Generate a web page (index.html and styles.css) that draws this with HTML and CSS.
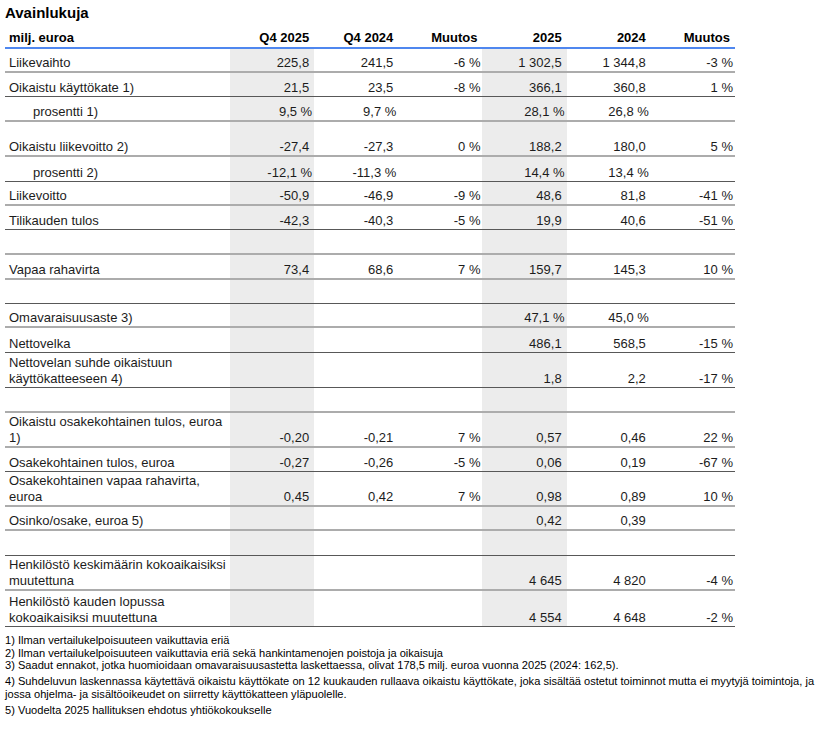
FILE: index.html
```html
<!DOCTYPE html>
<html lang="fi">
<head>
<meta charset="utf-8">
<title>Avainlukuja</title>
<link rel="stylesheet" href="styles.css">
</head>
<body>
<div class="page">
  <h1 class="title">Avainlukuja</h1>
  <table class="kpi">
    <colgroup>
      <col class="c-label"><col class="c-num"><col class="c-num"><col class="c-num"><col class="c-num"><col class="c-num"><col class="c-num">
    </colgroup>
    <thead>
      <tr class="hdr">
        <th class="lbl">milj. euroa</th><th>Q4 2025</th><th>Q4 2024</th><th>Muutos</th><th>2025</th><th>2024</th><th>Muutos</th>
      </tr>
    </thead>
    <tbody>
      <tr class="r24 lt"><td class="lbl">Liikevaihto</td><td>225,8</td><td>241,5</td><td class="p">-6 %</td><td>1&nbsp;302,5</td><td>1&nbsp;344,8</td><td class="p">-3 %</td></tr>
      <tr class="r24 dk"><td class="lbl">Oikaistu käyttökate 1)</td><td>21,5</td><td>23,5</td><td class="p">-8 %</td><td>366,1</td><td>360,8</td><td class="p">1 %</td></tr>
      <tr class="r25 lt"><td class="lbl sub">prosentti 1)</td><td class="p">9,5 %</td><td class="p">9,7 %</td><td></td><td class="p">28,1 %</td><td class="p">26,8 %</td><td></td></tr>
      <tr class="r35 lt"><td class="lbl">Oikaistu liikevoitto 2)</td><td>-27,4</td><td>-27,3</td><td class="p">0 %</td><td>188,2</td><td>180,0</td><td class="p">5 %</td></tr>
      <tr class="r25 dk"><td class="lbl sub">prosentti 2)</td><td class="p">-12,1 %</td><td class="p">-11,3 %</td><td></td><td class="p">14,4 %</td><td class="p">13,4 %</td><td></td></tr>
      <tr class="r24 lt"><td class="lbl">Liikevoitto</td><td>-50,9</td><td>-46,9</td><td class="p">-9 %</td><td>48,6</td><td>81,8</td><td class="p">-41 %</td></tr>
      <tr class="r24 dk"><td class="lbl">Tilikauden tulos</td><td>-42,3</td><td>-40,3</td><td class="p">-5 %</td><td>19,9</td><td>40,6</td><td class="p">-51 %</td></tr>
      <tr class="r25 lt"><td class="lbl"></td><td></td><td></td><td></td><td></td><td></td><td></td></tr>
      <tr class="r25 lt"><td class="lbl">Vapaa rahavirta</td><td>73,4</td><td>68,6</td><td class="p">7 %</td><td>159,7</td><td>145,3</td><td class="p">10 %</td></tr>
      <tr class="r24 dk"><td class="lbl"></td><td></td><td></td><td></td><td></td><td></td><td></td></tr>
      <tr class="r24 lt"><td class="lbl">Omavaraisuusaste 3)</td><td></td><td></td><td></td><td class="p">47,1 %</td><td class="p">45,0 %</td><td></td></tr>
      <tr class="r25 dk"><td class="lbl">Nettovelka</td><td></td><td></td><td></td><td>486,1</td><td>568,5</td><td class="p">-15 %</td></tr>
      <tr class="r35 dk"><td class="lbl">Nettovelan suhde oikaistuun<br>käyttökatteeseen 4)</td><td></td><td></td><td></td><td>1,8</td><td>2,2</td><td class="p">-17 %</td></tr>
      <tr class="r25 lt"><td class="lbl"></td><td></td><td></td><td></td><td></td><td></td><td></td></tr>
      <tr class="r35 lt"><td class="lbl">Oikaistu osakekohtainen tulos, euroa<br>1)</td><td>-0,20</td><td>-0,21</td><td class="p">7 %</td><td>0,57</td><td>0,46</td><td class="p">22 %</td></tr>
      <tr class="r24 dk"><td class="lbl">Osakekohtainen tulos, euroa</td><td>-0,27</td><td>-0,26</td><td class="p">-5 %</td><td>0,06</td><td>0,19</td><td class="p">-67 %</td></tr>
      <tr class="r35 lt"><td class="lbl">Osakekohtainen vapaa rahavirta,<br>euroa</td><td>0,45</td><td>0,42</td><td class="p">7 %</td><td>0,98</td><td>0,89</td><td class="p">10 %</td></tr>
      <tr class="r24 lt"><td class="lbl">Osinko/osake, euroa 5)</td><td></td><td></td><td></td><td>0,42</td><td>0,39</td><td></td></tr>
      <tr class="r25 dk"><td class="lbl"></td><td></td><td></td><td></td><td></td><td></td><td></td></tr>
      <tr class="r35 lt"><td class="lbl">Henkilöstö keskimäärin kokoaikaisiksi<br>muutettuna</td><td></td><td></td><td></td><td>4&nbsp;645</td><td>4&nbsp;820</td><td class="p">-4 %</td></tr>
      <tr class="r36 dk"><td class="lbl">Henkilöstö kauden lopussa<br>kokoaikaisiksi muutettuna</td><td></td><td></td><td></td><td>4&nbsp;554</td><td>4&nbsp;648</td><td class="p">-2 %</td></tr>
    </tbody>
  </table>
  <div class="notes">
    <p>1) Ilman vertailukelpoisuuteen vaikuttavia eriä</p>
    <p>2) Ilman vertailukelpoisuuteen vaikuttavia eriä sekä hankintamenojen poistoja ja oikaisuja</p>
    <p>3) Saadut ennakot, jotka huomioidaan omavaraisuusastetta laskettaessa, olivat 178,5 milj. euroa vuonna 2025 (2024: 162,5).</p>
    <p class="gap">4) Suhdeluvun laskennassa käytettävä oikaistu käyttökate on 12 kuukauden rullaava oikaistu käyttökate, joka sisältää ostetut toiminnot mutta ei myytyjä toimintoja, ja<br>jossa ohjelma- ja sisältöoikeudet on siirretty käyttökatteen yläpuolelle.</p>
    <p class="gap">5) Vuodelta 2025 hallituksen ehdotus yhtiökokoukselle</p>
  </div>
</div>
</body>
</html>
```
FILE: styles.css
```css
html, body {
  margin: 0;
  padding: 0;
  background: #ffffff;
}
body {
  font-family: "Liberation Sans", Arial, sans-serif;
  color: #1c1c1c;
}
.page {
  padding: 4px 5px 0 5px;
}
.title {
  margin: 0;
  font-size: 15px;
  line-height: 18px;
  font-weight: bold;
  color: #000;
}
.kpi {
  width: 730px;
  table-layout: fixed;
  border-collapse: separate;
  border-spacing: 0;
  font-size: 13px;
  line-height: 16px;
}
.c-label { width: 225px; }
.c-num { width: 84.16px; }
.kpi th, .kpi td {
  padding: 0 5px 0 4px;
  text-align: right;
  vertical-align: bottom;
  white-space: nowrap;
}
.kpi th {
  font-weight: bold;
  color: #000;
  height: 24px;
  padding-bottom: 1px;
  border-bottom: 2px solid #4f87ef;
}
.kpi .lbl {
  text-align: left;
}
.kpi td.sub {
  padding-left: 28px;
}
.kpi td.p {
  padding-right: 2px;
}
.kpi tbody td:nth-child(2),
.kpi tbody td:nth-child(5) {
  background: #ececec;
}
.kpi tr.lt td { border-bottom: 2px solid #acacac; }
.kpi tr.dk td { border-bottom: 1px solid #585858; }
.kpi tr.r24 { height: 24px; }
.kpi tr.r25 { height: 25px; }
.kpi tr.r35 { height: 35px; }
.kpi tr.r36 { height: 36px; }
.notes {
  margin-top: 7px;
  font-size: 11.1px;
  line-height: 12.5px;
  color: #000;
  width: 826px;
}
.notes p {
  margin: 0;
}
.notes p.gap {
  margin-top: 3.5px;
}
```
